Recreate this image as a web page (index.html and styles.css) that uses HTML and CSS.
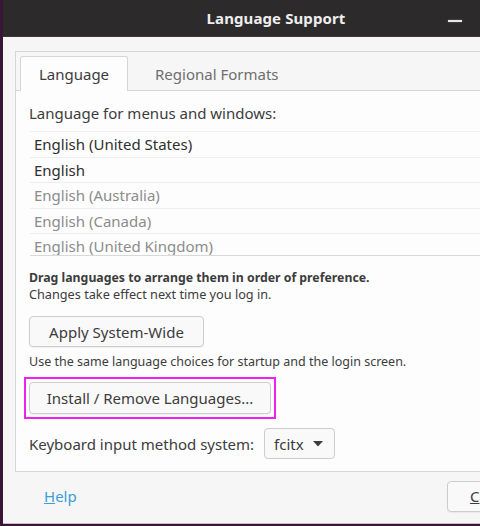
FILE: index.html
```html
<!DOCTYPE html>
<html lang="en">
<head>
<meta charset="utf-8">
<title>Language Support</title>
<link rel="stylesheet" href="styles.css">
</head>
<body>
<div class="desktop">
  <div class="window">
    <header class="titlebar">
      <span></span>
      <h1 class="title">Language Support</h1>
      <div class="controls">
        <button class="ctl" aria-label="Minimize"><span class="bar"></span></button>
        <button class="ctl" aria-label="Maximize"><span class="box"></span></button>
        <button class="ctl" aria-label="Close">
          <svg width="10" height="10" viewBox="0 0 10 10"><path d="M1 1l8 8M9 1l-8 8" stroke="#e8e8e8" stroke-width="1.5"/></svg>
        </button>
      </div>
    </header>

    <main class="body">
      <section class="notebook">
        <nav class="tabs">
          <div class="tab active">Language</div>
          <div class="tab">Regional Formats</div>
        </nav>

        <div class="page">
          <p class="label">Language for menus and windows:</p>
          <ul class="langlist">
            <li class="row">English (United States)</li>
            <li class="row">English</li>
            <li class="row dim">English (Australia)</li>
            <li class="row dim">English (Canada)</li>
            <li class="row dim">English (United Kingdom)</li>
          </ul>

          <div class="hint">
            <p class="hint-strong">Drag languages to arrange them in order of preference.</p>
            <p>Changes take effect next time you log in.</p>
          </div>

          <button class="btn btn-apply">Apply System-Wide</button>
          <p class="note">Use the same language choices for startup and the login screen.</p>

          <div class="focus-ring">
            <button class="btn btn-install">Install / Remove Languages...</button>
          </div>

          <div class="im-row">
            <span class="im-label">Keyboard input method system:</span>
            <button class="combo">fcitx
              <svg class="caret" width="10" height="6" viewBox="0 0 10 6"><path d="M0 0h10L5 5.5z" fill="#3c3c3c"/></svg>
            </button>
          </div>
        </div>
      </section>

      <footer class="actions">
        <a class="help" href="#"><u>H</u>elp</a>
        <button class="btn btn-cancel"><u>C</u>ancel</button>
      </footer>
    </main>
  </div>
</div>
</body>
</html>
```

FILE: styles.css
```css
* { box-sizing: border-box; }

html, body {
  margin: 0;
  padding: 0;
  height: 100%;
  overflow: hidden;
}

body {
  background: #3a1636;
  font-family: "Noto Sans", "Open Sans", sans-serif;
  color: #3c3c3c;
}

.desktop {
  display: flex;
  padding-left: 3px;
  height: 526px;
}

.window {
  flex: 0 0 546px;
  height: 524px;
  background: #f6f6f6;
  border-bottom: 1px solid #cdb8ca;
  display: flex;
  flex-direction: column;
}

/* header bar */
.titlebar {
  height: 37px;
  background: #2c2a2a;
  border-bottom: 1px solid #3a3838;
  display: grid;
  grid-template-columns: 1fr auto 1fr;
  align-items: center;
}

.title {
  margin: 0;
  font-size: 15px;
  font-weight: bold;
  color: #eeeeee;
  letter-spacing: 0.1px;
}

.controls {
  justify-self: end;
  display: flex;
  gap: 4px;
  padding-right: 6px;
}

.ctl {
  width: 32px;
  height: 24px;
  border: 0;
  padding: 0;
  background: transparent;
  display: flex;
  align-items: center;
  justify-content: center;
}

.ctl .bar {
  display: block;
  width: 14px;
  height: 2px;
  margin-top: 6px;
  background: #e8e8e8;
  box-shadow: 0 0 2px rgba(255, 255, 255, 0.35);
}

.ctl .box {
  display: block;
  width: 10px;
  height: 10px;
  border: 1px solid #e8e8e8;
}

/* dialog body */
.body {
  flex: 1;
  display: flex;
  flex-direction: column;
  padding: 14px 0 0 12px;
}

.notebook {
  border: 1px solid #d6d6d6;
  height: 421px;
  display: flex;
  flex-direction: column;
  background: #f6f6f6;
}

.tabs {
  display: flex;
  gap: 6px;
  padding: 4px 0 0 4px;
  border-bottom: 1px solid #d6d6d6;
  height: 39px;
}

.tab {
  padding: 0 20px;
  height: 34px;
  display: flex;
  align-items: center;
  justify-content: center;
  font-size: 15px;
  color: #6e6e6e;
  border: 1px solid transparent;
  border-bottom: 0;
  border-radius: 3px 3px 0 0;
}

.tab.active {
  width: 108px;
  padding: 0;
  color: #3c3c3c;
  background: #fdfdfd;
  border-color: #d6d6d6;
  height: 35px;
  margin-bottom: -1px;
}

.page {
  flex: 1;
  background: #fdfdfd;
  padding: 12px 0 0 13px;
  display: flex;
  flex-direction: column;
  align-items: flex-start;
}

p { margin: 0; }

.label {
  font-size: 15px;
  line-height: 20px;
}

.langlist {
  list-style: none;
  margin: 8px 0 0 1px;
  padding: 0;
  width: 100%;
  height: 125px;
  overflow: hidden;
  border-bottom: 1px solid #d8d8d8;
  border-top: 1px solid #eeeeee;
}

.row {
  height: 25.5px;
  padding-left: 4px;
  display: flex;
  align-items: center;
  font-size: 15px;
  color: #2f2f2f;
  border-bottom: 1px solid #eeeeee;
}

.row.dim { color: #8c8c8c; }

.hint {
  margin-top: 14px;
  font-size: 12.7px;
  line-height: 16px;
}

.hint-strong {
  font-weight: bold;
  font-size: 12.3px;
}

.btn {
  font-family: inherit;
  font-size: 15px;
  color: #3c3c3c;
  background: #f9f9f9;
  border: 1px solid #cdcdcd;
  border-radius: 4px;
  box-shadow: 0 1px 1px rgba(0, 0, 0, 0.05);
  height: 31px;
  padding: 0;
  white-space: nowrap;
  cursor: default;
}

.btn-apply {
  margin-top: 14px;
  width: 175px;
}

.note {
  margin-top: 7px;
  font-size: 12.5px;
  line-height: 16px;
}

/* keyboard-focus indicator around the install button */
.focus-ring {
  margin: 7px 0 0 -5px;
  border: 2px solid #f21ff2;
  padding: 3px;
  display: flex;
}

.btn-install {
  width: 242px;
  height: 32px;
}

.im-row {
  margin-top: 9px;
  display: flex;
  align-items: center;
  gap: 10px;
  font-size: 15px;
}

.combo {
  font-family: inherit;
  font-size: 15px;
  color: #3c3c3c;
  background: #f9f9f9;
  border: 1px solid #cdcdcd;
  border-radius: 4px;
  height: 31px;
  width: 71px;
  padding: 0 0 0 9px;
  display: flex;
  align-items: center;
  gap: 9px;
}

.caret { margin-top: 1px; }

/* bottom action area */
.actions {
  flex: 1;
  display: flex;
  align-items: center;
  justify-content: space-between;
  padding: 0 0 3px 29px;
}

.help {
  font-size: 15px;
  color: #3b9ed8;
  text-decoration: none;
}

.btn-cancel {
  margin-right: 12px;
  width: 90px;
  padding-left: 22px;
  text-align: left;
}
```
